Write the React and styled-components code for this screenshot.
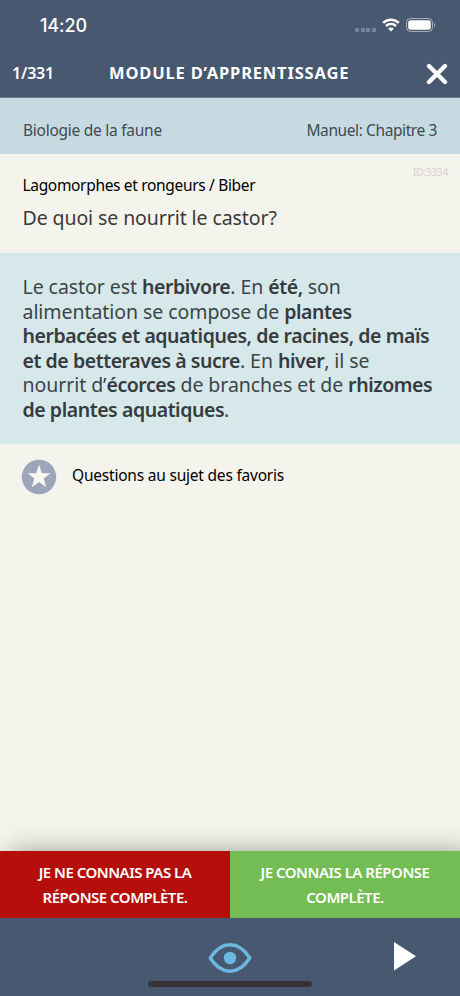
import React from "react";
import styled, { createGlobalStyle } from "styled-components";

const GlobalStyle = createGlobalStyle`
  * {
    box-sizing: border-box;
  }

  body {
    margin: 0;
    background: #f5f4ec;
    font-family: "Noto Sans", "Open Sans", sans-serif;
  }

  button {
    font-family: inherit;
    border: none;
    padding: 0;
    background: none;
  }
`;

const App = () => {
  return (
    <Screen>
      <GlobalStyle />
      <Header>
        <StatusBar>
          <Time>14:20</Time>
          <StatusIcons>
            <Signal>
              <Dot />
              <Dot />
              <Dot />
              <Dot />
            </Signal>
            <svg width="18" height="14" viewBox="0 0 18 14" fill="none">
              <path d="M1.2 4.9C5.6 .6 12.4 .6 16.8 4.9" stroke="#fff" strokeWidth="2.5" />
              <path d="M4 8C6.9 5.3 11.1 5.3 14 8" stroke="#fff" strokeWidth="2.4" />
              <path d="M9 13.5L6.1 10.6C7.8 9.2 10.2 9.2 11.9 10.6Z" fill="#fff" />
            </svg>
            <svg width="30" height="14" viewBox="0 0 30 14" fill="none">
              <rect x=".5" y=".5" width="26" height="13" rx="4" stroke="#fff" strokeOpacity=".5" />
              <rect x="2.2" y="2.2" width="22.6" height="9.6" rx="2.3" fill="#fff" />
              <path d="M28 4.7C29.5 5.2 29.5 8.8 28 9.3Z" fill="#fff" fillOpacity=".5" />
            </svg>
          </StatusIcons>
        </StatusBar>
        <TitleBar>
          <Counter>1/331</Counter>
          <Title>MODULE D’APPRENTISSAGE</Title>
          <CloseButton aria-label="Fermer">
            <svg width="22" height="22" viewBox="0 0 22 22">
              <path d="M3 3L19 19M19 3L3 19" stroke="#fff" strokeWidth="4.3" strokeLinecap="round" />
            </svg>
          </CloseButton>
        </TitleBar>
      </Header>

      <ChapterBar>
        <Chapter $spacing="-0.26px">Biologie de la faune</Chapter>
        <Chapter $spacing="-0.4px">Manuel: Chapitre 3</Chapter>
      </ChapterBar>

      <Question>
        <QuestionId>ID:3334</QuestionId>
        <Category>Lagomorphes et rongeurs / Biber</Category>
        <QuestionText>De quoi se nourrit le castor?</QuestionText>
      </Question>

      <Answer>
        Le castor est <b>herbivore</b>. En <b>été,</b> son
        <br />
        alimentation se compose de <b>plantes</b>
        <br />
        <b>herbacées et aquatiques, de racines, de maïs</b>
        <br />
        <b>et de betteraves à sucre</b>. En <b>hiver</b>, il se
        <br />
        nourrit d’<b>écorces</b> de branches et de <b>rhizomes</b>
        <br />
        <b>de plantes aquatiques</b>.
      </Answer>

      <Favorite>
        <svg width="36" height="36" viewBox="0 0 36 36">
          <circle cx="18" cy="18" r="17.2" fill="#9ca5ba" />
          <path
            d="M18 5.8L20.9 14.3H29.6L22.6 19.6L25.3 28.3L18 23L10.7 28.3L13.4 19.6L6.4 14.3H15.1Z"
            fill="#f8f8f2"
          />
        </svg>
        <FavoriteLabel>Questions au sujet des favoris</FavoriteLabel>
      </Favorite>

      <Choices>
        <ChoiceButton $color="#b60f0b">
          JE NE CONNAIS PAS LA
          <br />
          RÉPONSE COMPLÈTE.
        </ChoiceButton>
        <ChoiceButton $color="#74bd55">
          JE CONNAIS LA RÉPONSE
          <br />
          COMPLÈTE.
        </ChoiceButton>
      </Choices>

      <Footer>
        <span />
        <IconButton aria-label="Voir la réponse">
          <svg width="44" height="32" viewBox="0 0 44 32" fill="none">
            <path
              d="M2.200 16C8 7 14 2.800 22 2.800S36 7 41.800 16C36 25 30 29.200 22 29.200S8 25 2.200 16Z"
              stroke="#6cb9e0"
              strokeWidth="3.4"
              strokeLinejoin="round"
            />
            <circle cx="22" cy="16" r="6.2" fill="#6cb9e0" />
          </svg>
        </IconButton>
        <NextButton aria-label="Suivant">
          <svg width="22" height="29" viewBox="0 0 22 29">
            <path d="M0 0L22 14.3L0 28.600Z" fill="#fff" />
          </svg>
        </NextButton>
        <HomeIndicator />
      </Footer>
    </Screen>
  );
};

const Screen = styled.div`
  display: flex;
  flex-direction: column;
  width: 460px;
  height: 996px;
  overflow: hidden;
  background: #f5f4ec;
`;

const Header = styled.header`
  height: 98px;
  background: #485870;
  border-bottom: 1px solid #6b7f96;
  color: #fff;
`;

const StatusBar = styled.div`
  display: flex;
  justify-content: space-between;
  align-items: center;
  height: 50px;
  padding: 0 24px 0 40px;
`;

const Time = styled.span`
  font-family: Inter, sans-serif;
  font-size: 18px;
  font-weight: 500;
  letter-spacing: -0.1px;
`;

const StatusIcons = styled.div`
  display: flex;
  align-items: center;
  gap: 6px;
`;

const Signal = styled.div`
  display: flex;
  gap: 1.7px;
  margin-top: 9px;
`;

const Dot = styled.span`
  width: 4px;
  height: 4px;
  border-radius: 1px;
  background: #77849a;
`;

const TitleBar = styled.div`
  display: grid;
  grid-template-columns: 97px 1fr 34px;
  align-items: center;
  height: 47px;
  padding-left: 12px;
`;

const Counter = styled.span`
  font-size: 16px;
  font-weight: 600;
  line-height: 24px;
  letter-spacing: -0.2px;
  padding-bottom: 2px;
`;

const Title = styled.h1`
  margin: 0;
  padding-bottom: 2px;
  font-size: 16.5px;
  font-weight: 700;
  line-height: 24px;
  letter-spacing: 0.82px;
  white-space: nowrap;
`;

const CloseButton = styled.button`
  display: flex;
`;

const ChapterBar = styled.div`
  display: flex;
  justify-content: space-between;
  height: 55.5px;
  padding: 20px 23px 0;
  background: #c6dae1;
`;

const Chapter = styled.span`
  color: #3f4b53;
  font-size: 15.5px;
  line-height: 24px;
  letter-spacing: ${(props) => props.$spacing};
`;

const Question = styled.section`
  position: relative;
  height: 99px;
  padding: 19px 22.5px 0;
`;

const QuestionId = styled.span`
  position: absolute;
  top: 10px;
  right: 12px;
  color: #d3d3cf;
  font-size: 10.5px;
  line-height: 16px;
  letter-spacing: -0.4px;
`;

const Category = styled.p`
  margin: 0;
  color: #000;
  font-size: 15.5px;
  line-height: 24px;
  letter-spacing: -0.33px;
`;

const QuestionText = styled.h2`
  margin: 7px 0 0;
  color: #3a3a3a;
  font-size: 19.5px;
  font-weight: 400;
  line-height: 28px;
  letter-spacing: -0.09px;
`;

const Answer = styled.section`
  height: 191px;
  padding: 22.5px 0 0 22.5px;
  background: #d6e8ea;
  color: #3c4447;
  font-size: 19.5px;
  line-height: 24.5px;
  letter-spacing: -0.06px;
  white-space: nowrap;

  b {
    color: #363b3e;
    font-weight: 650;
    letter-spacing: -0.44px;
  }
`;

const Favorite = styled.div`
  display: flex;
  align-items: center;
  gap: 15px;
  padding: 15px 21px;
`;

const FavoriteLabel = styled.span`
  padding-bottom: 3px;
  color: #000;
  font-size: 15.5px;
  line-height: 24px;
  letter-spacing: -0.21px;
`;

const Choices = styled.div`
  display: grid;
  grid-template-columns: 1fr 1fr;
  height: 67px;
  margin-top: auto;
  box-shadow: 10px 0 26px rgba(0, 0, 0, 0.36);
`;

const ChoiceButton = styled.button`
  background: ${(props) => props.$color};
  color: #fff;
  font-size: 15px;
  font-weight: 600;
  line-height: 24.5px;
  letter-spacing: -0.5px;
`;

const Footer = styled.footer`
  position: relative;
  display: grid;
  grid-template-columns: 1fr auto 1fr;
  align-items: start;
  height: 78px;
  padding-top: 24px;
  background: #485870;
`;

const IconButton = styled.button`
  display: flex;
  justify-content: center;
`;

const NextButton = styled(IconButton)`
  justify-self: end;
  margin-right: 44px;
`;

const HomeIndicator = styled.div`
  position: absolute;
  bottom: 9px;
  left: 148px;
  width: 164px;
  height: 6px;
  border-radius: 3px;
  background: #343434;
`;

export default App;
